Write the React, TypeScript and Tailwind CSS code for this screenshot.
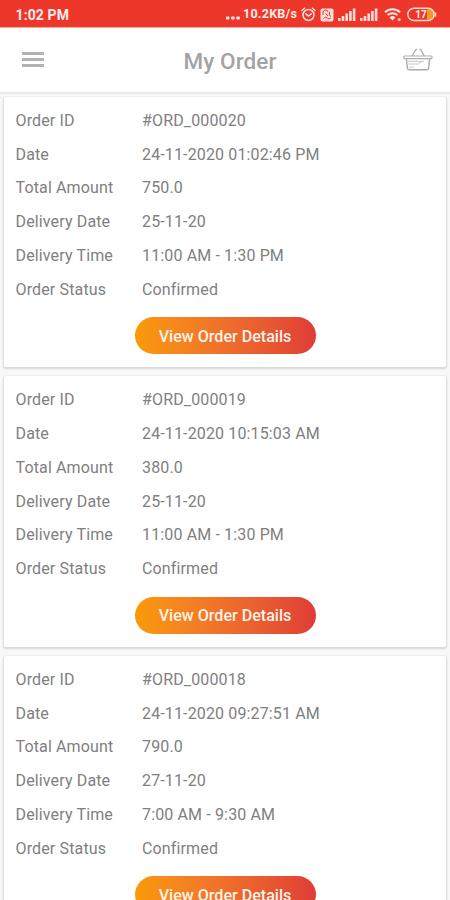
interface IOrder {
    id: string;
    date: string;
    amount: string;
    deliveryDate: string;
    deliveryTime: string;
    status: string;
}

const orders: IOrder[] = [
    {
        id: '#ORD_000020',
        date: '24-11-2020 01:02:46 PM',
        amount: '750.0',
        deliveryDate: '25-11-20',
        deliveryTime: '11:00 AM - 1:30 PM',
        status: 'Confirmed',
    },
    {
        id: '#ORD_000019',
        date: '24-11-2020 10:15:03 AM',
        amount: '380.0',
        deliveryDate: '25-11-20',
        deliveryTime: '11:00 AM - 1:30 PM',
        status: 'Confirmed',
    },
    {
        id: '#ORD_000018',
        date: '24-11-2020 09:27:51 AM',
        amount: '790.0',
        deliveryDate: '27-11-20',
        deliveryTime: '7:00 AM - 9:30 AM',
        status: 'Confirmed',
    },
];

const SignalIcon = () => (
    <svg width="18" height="13" viewBox="0 0 18 13" fill="#ffdcd8">
        <rect x="0" y="10" width="2.6" height="3" />
        <rect x="3.7" y="8" width="2.6" height="5" />
        <rect x="7.4" y="5.5" width="2.6" height="7.5" />
        <rect x="11.1" y="3" width="2.6" height="10" />
        <rect x="14.8" y="0.5" width="2.6" height="12.5" />
    </svg>
);

const StatusBar = () => (
    <div className="flex h-[28px] shrink-0 items-center border-b border-[#f7a8a1] bg-[#ee372b] pt-[2px] pl-[15.5px] text-[#ffece9]">
        <span className="w-[209.5px] text-[14px] leading-none font-bold tracking-[0.1px]">1:02 PM</span>
        <svg className="mt-[6px] mr-[2px]" width="16" height="4" viewBox="0 0 16 4" fill="#ffece9">
            <rect x="1" y="0.5" width="3.4" height="3" rx="0.8" />
            <rect x="6.2" y="0.5" width="3.4" height="3" rx="0.8" />
            <rect x="11.4" y="0.5" width="3.4" height="3" rx="0.8" />
        </svg>
        <span className="w-[58px] text-[12.5px] leading-none font-bold tracking-[0.25px] whitespace-nowrap">10.2KB/s</span>
        {/* Alarm */}
        <svg width="15" height="15" viewBox="0 0 15 15" fill="none" stroke="#ffdcd8" strokeWidth="1.5" strokeLinecap="round">
            <circle cx="7.5" cy="8" r="5.5" />
            <path d="M0.9 3.5 3.6 1.2M14.1 3.5 11.4 1.2M4.8 6.8 7.5 9 10.2 6.8" />
        </svg>
        {/* VoLTE */}
        <svg className="ml-[4px]" width="14" height="14" viewBox="0 0 14 14" fill="none">
            <rect x="0.5" y="0.5" width="13" height="13" rx="2" fill="#ffdcd8" />
            <path d="M3 7V5a2.5 2.5 0 0 1 5-1M5.5 5.5 8 8M9.5 4v3.5l1.5 1M3.5 10.5q1.8-2.4 3.6-0.6t3.6 0.4" stroke="#ee372b" strokeWidth="1" />
        </svg>
        <div className="ml-[4px] flex gap-[4px]">
            <SignalIcon />
            <SignalIcon />
        </div>
        {/* Wifi */}
        <svg className="ml-[6px]" width="18" height="15" viewBox="0 0 18 15" fill="none" stroke="#ffe3df" strokeWidth="2">
            <path d="M1 5.2a11 11 0 0 1 15 0M3.6 8.1a7.2 7.2 0 0 1 9.8 0" />
            <path d="M8.5 13.5 5.6 10.4a4.3 4.3 0 0 1 5.8 0z" fill="#ffe3df" stroke="none" />
            <circle cx="15.2" cy="12.6" r="1.6" fill="#ffb9b2" stroke="none" />
        </svg>
        {/* Battery */}
        <svg className="ml-[5px]" width="30" height="15" viewBox="0 0 30 15">
            <path d="M20 2.2h2.5a5.3 5.3 0 0 1 0 10.6H20z" fill="#f79a20" />
            <rect x="0.8" y="1.3" width="26.4" height="12.2" rx="6.1" fill="none" stroke="#ffdcd8" strokeWidth="1.4" />
            <path d="M28.6 5.5v4" stroke="#ffdcd8" strokeWidth="1.3" />
            <text x="14" y="11.2" textAnchor="middle" fontSize="10" fontWeight="700" fill="#ffece9">17</text>
        </svg>
    </div>
);

const Header = () => (
    <header className="grid h-[64px] shrink-0 grid-cols-[60px_1fr_60px] items-center bg-white">
        <div className="-mt-px ml-[21.5px] flex w-[22px] flex-col gap-[3px]">
            <span className="h-[3px] bg-[#b2b2b2]" />
            <span className="h-[3px] bg-[#b2b2b2]" />
            <span className="h-[3px] bg-[#b2b2b2]" />
        </div>
        <h1 className="pt-[3px] pl-[10px] text-center text-[22.5px] leading-none font-medium tracking-[0.1px] text-[#a3a3a3]">My Order</h1>
        {/* Basket */}
        <svg className="ml-[13px]" width="30" height="24" viewBox="0 0 30 24" fill="none" stroke="#ababab">
            <path d="M9 8l3.6-6 1.6-1M21.2 8l-3.2-6-1.4-1" strokeWidth="1.3" />
            <rect x="0.7" y="8" width="28.4" height="2.6" rx="1" strokeWidth="1.2" />
            <path d="M3.4 11l1 9.2q0.2 1.6 1.6 1.6h18q1.4 0 1.6-1.6l1-9.2" strokeWidth="1.4" />
            <path d="M5 13.4h16M5.2 16h10l3.5-2.6M6 19.2h5" strokeWidth="0.9" stroke="#bdbdbd" />
        </svg>
    </header>
);

const OrderCard = ({ order }: { order: IOrder }) => {
    const rows = [
        { label: 'Order ID', value: order.id },
        { label: 'Date', value: order.date },
        { label: 'Total Amount', value: order.amount },
        { label: 'Delivery Date', value: order.deliveryDate },
        { label: 'Delivery Time', value: order.deliveryTime },
        { label: 'Order Status', value: order.status },
    ];

    return (
        <div className="h-[270.5px] shrink-0 rounded-[2px] bg-white px-[11.5px] pt-[7.5px] shadow-[0_1px_2px_1px_rgba(0,0,0,0.13)]">
            {rows.map((row) => (
                <div key={row.label} className="flex h-[33.75px] items-center text-[16px] tracking-[0.14px] text-[#808080]">
                    <span className="w-[126.5px]">{row.label}</span>
                    <span>{row.value}</span>
                </div>
            ))}
            <button className="mx-auto mt-[10.5px] block h-[37px] w-[181px] rounded-full bg-linear-to-r from-[#fb9a04] to-[#df3c36] pt-[3px] text-[16.1px] font-medium text-[#fff3ea]">
                View Order Details
            </button>
        </div>
    );
};

const App = () => {
    return (
        <div className="flex h-[900px] w-[450px] flex-col overflow-hidden bg-[#f8f8f8] font-[Roboto,sans-serif]">
            <StatusBar />
            <Header />
            <main className="flex flex-col gap-[9px] border-t-2 border-[#e9e9e9] px-[4px] pt-[2.5px]">
                {orders.map((order) => (
                    <OrderCard key={order.id} order={order} />
                ))}
            </main>
        </div>
    );
};

export default App;
